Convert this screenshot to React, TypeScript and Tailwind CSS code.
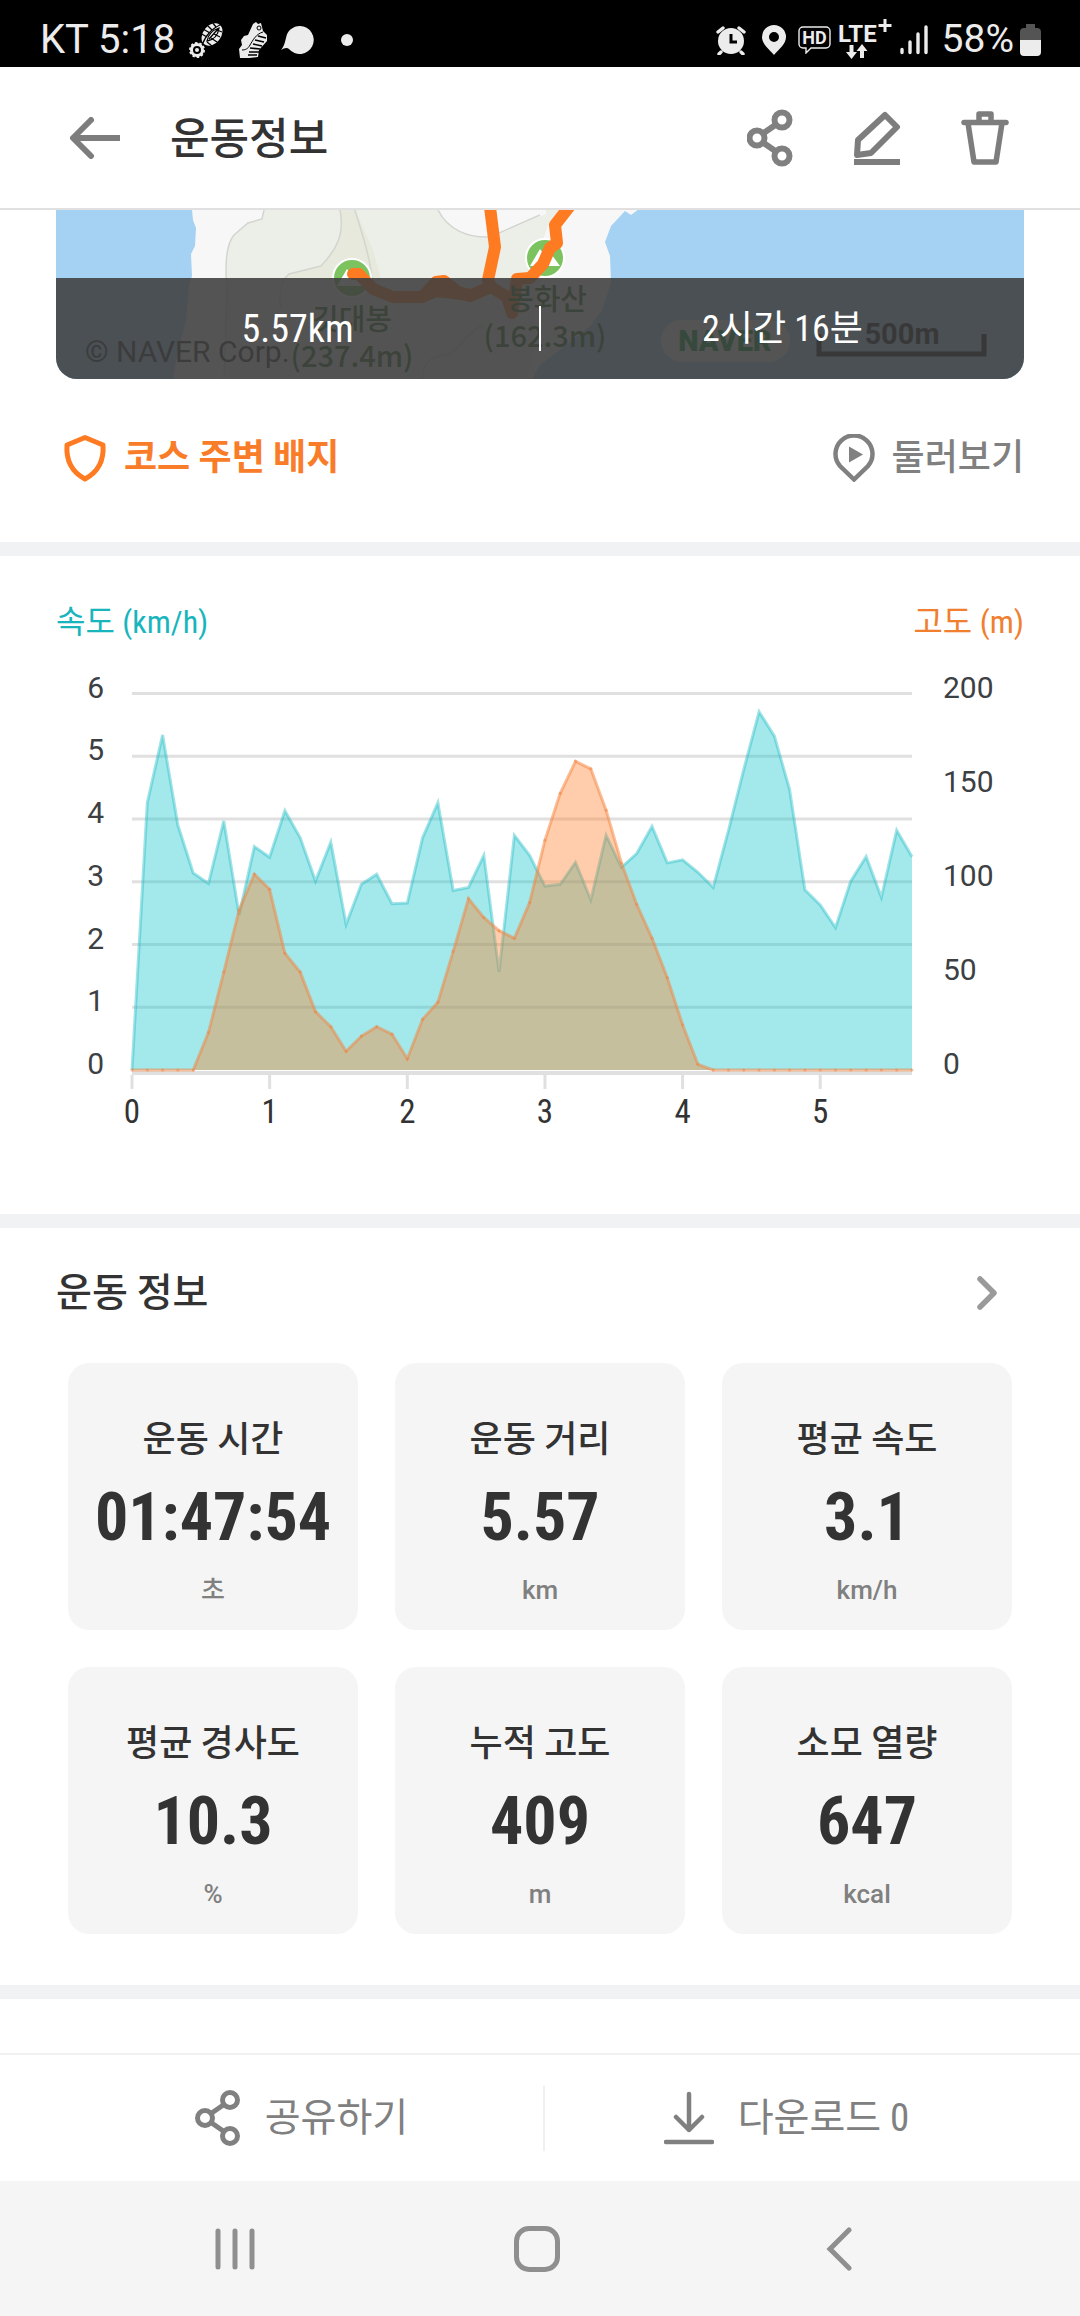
import type { ReactNode } from 'react';

const SPEED = [
  0, 4.26, 5.34, 3.9, 3.14, 2.97, 3.97, 2.47, 3.56, 3.39, 4.13, 3.7, 3.01, 3.63, 2.32, 2.96, 3.12, 2.65,
  2.66, 3.7, 4.26, 2.86, 2.91, 3.42, 1.56, 3.74, 3.42, 2.93, 2.96, 3.31, 2.71, 3.74, 3.23, 3.45, 3.88,
  3.3, 3.35, 3.15, 2.91, 3.82, 4.79, 5.71, 5.32, 4.47, 2.87, 2.63, 2.27, 3.01, 3.4, 2.75, 3.82, 3.4,
];

const ALTITUDE = [
  0, 0, 0, 0, 0, 20, 52, 85, 104, 96, 62, 52, 31, 23, 10, 18, 23, 19, 6, 27, 36, 63, 91, 81, 74, 70, 89,
  122, 147, 164, 160, 138, 110, 88, 70, 49, 24, 3, 0, 0, 0, 0, 0, 0, 0, 0, 0, 0, 0, 0, 0, 0,
];

const STATS = [
  { label: '운동 시간', value: '01:47:54', unit: '초' },
  { label: '운동 거리', value: '5.57', unit: 'km' },
  { label: '평균 속도', value: '3.1', unit: 'km/h' },
  { label: '평균 경사도', value: '10.3', unit: '%' },
  { label: '누적 고도', value: '409', unit: 'm' },
  { label: '소모 열량', value: '647', unit: 'kcal' },
];

function StatusBar() {
  return (
    <div className="flex h-[67px] items-center justify-between bg-black pt-3 pr-[39px] pl-10 font-['Roboto',sans-serif] text-[39px] leading-[55px] text-[#ececec]">
      <div className="flex items-center gap-3.5">
        <span className="text-[40px]">KT 5:18</span>
        <svg width="36" height="36" viewBox="0 0 36 36" fill="none" aria-hidden="true">
          <ellipse cx="23" cy="12.5" rx="9" ry="12.5" transform="rotate(38 23 12.5)" fill="#ececec" />
          <g stroke="#000" strokeWidth="1.3">
            <path d="M13 23C17 13 22 7 33 2M18 19c1-6 6-11 12-13-1 7-5 12-12 13zM20 17l9-10" />
            <path d="M11 11l7 4M14 7l7 4M18 3l5 5M23 0l4 5M31 15l-6-3M28 20l-6-4M23 24l-5-4M33 10l-5-2" />
          </g>
          <circle cx="8" cy="28" r="5.5" stroke="#ececec" strokeWidth="3" />
          <circle cx="8" cy="28" r="7" stroke="#ececec" strokeWidth="2" strokeDasharray="2.4 2" />
          <circle cx="8" cy="28" r="2" fill="#ececec" />
        </svg>
        <svg width="28" height="36" viewBox="0 0 28 36" aria-hidden="true">
          <path d="M14 2l3-2 2 2 3-1 2 8 4 4v6l-8 9-1 7-9 1H1l-1-9 3-4-1-5 3-4 4-1z" fill="#ececec" />
          <g stroke="#000" strokeWidth="1.6" fill="none">
            <path d="M24 10c-7 2-10 8-13 13-2 4-5 5-8 5" strokeWidth="1" />
            <path d="M19 14l8 2M16 18l9 2M14 22l9 2M11 26l10 1M10 30l10 0M9 33l9 0" />
            <circle cx="20" cy="6" r="2" strokeWidth="1" />
          </g>
        </svg>
        <svg width="34" height="30" viewBox="0 0 34 30" aria-hidden="true">
          <path d="M19 1a14 14 0 1 1-11 23c-2-2-5-1-8 1 4-5 4-9 5-12A14 14 0 0 1 19 1z" fill="#ececec" />
        </svg>
        <span className="ml-3 size-3 rounded-full bg-[#ececec]" />
      </div>
      <div className="flex items-center">
        <svg width="30" height="30" viewBox="0 0 30 30" fill="none" aria-hidden="true">
          <circle cx="15" cy="16" r="13" fill="#ececec" />
          <path d="M2 7l5-4M28 7l-5-4M5 27l-2 2M25 27l2 2" stroke="#ececec" strokeWidth="3.4" strokeLinecap="round" />
          <path d="M15 9v8h6" stroke="#000" strokeWidth="3" />
        </svg>
        <svg className="ml-4" width="24" height="30" viewBox="0 0 24 30" aria-hidden="true">
          <path fillRule="evenodd" d="M12 0a12 12 0 0 1 12 12c0 7-7 12-12 18C7 24 0 19 0 12A12 12 0 0 1 12 0zm0 7a5 5 0 1 0 0 10 5 5 0 0 0 0-10z" fill="#ececec" />
        </svg>
        <svg className="ml-3" width="34" height="28" viewBox="0 0 34 28" fill="none" aria-label="HD">
          <path d="M5 1h23a4 4 0 0 1 4 4v13a4 4 0 0 1-4 4H13l-5 5v-5H5a4 4 0 0 1-4-4V5a4 4 0 0 1 4-4z" stroke="#ececec" strokeWidth="1.4" />
          <text x="16.5" y="18" textAnchor="middle" fontFamily="Roboto" fontWeight="700" fontSize="18" fill="#ececec">HD</text>
        </svg>
        <svg className="ml-1.5" width="54" height="42" viewBox="0 0 54 42" aria-label="LTE+">
          <text x="0" y="23" fontFamily="Roboto" fontWeight="700" fontSize="24" fill="#ececec">LTE</text>
          <path d="M47 0v13M40.5 6.5h13" stroke="#ececec" strokeWidth="3" />
          <path d="M11.5 26h4v7H19L13.500 40 8 33h3.500zM22 39h4v-7h3.500L24 25l-5.500 7H22z" fill="#ececec" />
        </svg>
        <svg className="ml-2" width="28" height="30" viewBox="0 0 28 30" stroke="#ececec" strokeWidth="3.4" strokeLinecap="round" aria-hidden="true">
          <path d="M2 24.5v3M10 17v10.5M18 9v18.5M26 2v25.500" />
        </svg>
        <span className="ml-3.5">58%</span>
        <svg className="ml-1.5" width="21" height="33" viewBox="0 0 21 33" aria-hidden="true">
          <path d="M6 1h9v4h2a4 4 0 0 1 4 4v9H0V9a4 4 0 0 1 4-4h2z" fill="#545454" />
          <path d="M0 17h21v12a4 4 0 0 1-4 4H4a4 4 0 0 1-4-4z" fill="#ececec" />
        </svg>
      </div>
    </div>
  );
}

function ShareIcon({ stroke = 5 }: { stroke?: number }) {
  return (
    <svg width="46" height="58" viewBox="0 0 46 58" fill="none" stroke="#808080" strokeWidth={stroke} aria-hidden="true">
      <circle cx="10" cy="29" r="7.5" />
      <circle cx="35" cy="11" r="7.5" />
      <circle cx="35" cy="47" r="7.5" />
      <path d="M16 24.5l13-9M16 33.5l13 9" />
    </svg>
  );
}

function Header() {
  return (
    <header className="flex items-center border-b-2 border-[#e0e0e0] py-11 pr-[71px] pl-[68px]">
      <button type="button" aria-label="뒤로">
        <svg width="52" height="42" viewBox="0 0 52 42" fill="none" stroke="#7d7d7d" strokeWidth="6" aria-hidden="true">
          <path d="M4 21h48" />
          <path d="M23 3L5 21l18 18" strokeLinecap="round" strokeLinejoin="round" />
        </svg>
      </button>
      <h1 className="ml-[50px] flex-1 pt-1 text-[43px] leading-[49px] font-medium text-[#333]">운동정보</h1>
      <div className="flex h-[53px] items-center gap-[60px]">
        <button type="button" aria-label="공유">
          <ShareIcon stroke={6} />
        </button>
        <button type="button" aria-label="편집">
          <svg width="48" height="54" viewBox="0 0 48 54" fill="none" stroke="#7d7d7d" strokeWidth="6" aria-hidden="true">
            <path d="M1 51h46" />
            <path d="M4 44l1-15L32 4l12 12-26 26z" strokeLinejoin="round" />
          </svg>
        </button>
        <button type="button" aria-label="삭제">
          <svg width="48" height="54" viewBox="0 0 48 54" fill="none" stroke="#7d7d7d" strokeWidth="5.5" aria-hidden="true">
            <path d="M3 11.5h42" strokeLinecap="round" />
            <path d="M18 11V3h12v8M7 12l6 39h22l6-39" strokeLinejoin="round" />
          </svg>
        </button>
      </div>
    </header>
  );
}

function PeakMarker({ x, y }: { x: number; y: number }) {
  return (
    <g>
      <circle cx={x} cy={y} r="19" fill="#7cc35f" stroke="#fff" strokeWidth="2" />
      <path d={`M${x - 15} ${y + 8}l10-17 5 7 4-5 11 15z`} fill="#fff" />
    </g>
  );
}

function CourseMap() {
  return (
    <div className="relative mx-14 h-[169px] overflow-hidden rounded-b-[21px] bg-[#a5d2f3]">
      <svg className="h-full w-full" viewBox="0 0 968 169" preserveAspectRatio="xMidYMid slice" aria-hidden="true">
        <path d="M136 0l1 10 3 8-1 18-4 8 1 22-3 10-3 35-8 30-5 28h359l8-14 13-10 20-15 17-14 12-16 6-18 3-10-1-26-5-14 6-16 14-15 6 4 8-6z" fill="#f7f7f7" />
        <path d="M208 0l-2 9-14 4-14 12c-8 10-8 28-8 38l1 17-3 89h300l8-14 5-75 14-30-8-20 5-15 20-15z" fill="#eceee8" />
        <path d="M284 0c5 25-4 40-19 56l-32 8-8 6h100l-8-30-18-40z" fill="#e6e9dc" />
        <path d="M382 0c10 20 30 28 52 28l56-24V0z" fill="#f7f7f7" />
        <g fill="none" stroke="#d3d5cf" strokeWidth="1.5">
          <path d="M208 0l-2 9-14 4-14 12c-8 10-8 28-8 38l1 17-3 89" />
          <path d="M284 0c5 25-4 40-19 56l-32 8c-10 8-10 22-8 34" />
          <path d="M299 0c6 22 14 40 17 68l10 12" />
          <path d="M382 0c10 20 30 28 52 27l50-22M428 115c-20 8-25 28-38 30-20 2-22 10-24 24" />
        </g>
        <PeakMarker x={296} y={68} />
        <PeakMarker x={489} y={48} />
        <g fill="none" stroke="#ff7b22" strokeWidth="12" strokeLinejoin="round" strokeLinecap="round">
          <path d="M297 64h6l14 15 20 8h29l14-15 8-1 14 11 12 4 21-9-3-7 7-33-5-40" />
          <path d="M366 87l14-6 35 4 20-8 16 10 5 16 5-34 13-1 13-14 7-16 7-5-2-18 14-18" />
        </g>
        <g fontFamily="'Noto Sans CJK KR', sans-serif" fontWeight="500" fontSize="29" fill="#2e6b28" textAnchor="middle">
          <text x="296" y="120">깃대봉</text>
          <text x="296" y="157">(237.4m)</text>
          <text x="491" y="100">봉화산</text>
          <text x="489" y="137">(162.3m)</text>
        </g>
        <text x="29" y="152" fontFamily="Roboto" fontSize="30" fill="#333">© NAVER Corp.</text>
        <rect x="605" y="110" width="129" height="42" rx="21" fill="#f7f7f7" />
        <text x="669" y="141" fontFamily="Roboto" fontWeight="900" fontSize="29" fill="#0a9a3c" textAnchor="middle">NAVER</text>
        <path d="M763 124v20h165v-20" fill="none" stroke="#111" strokeWidth="5" />
        <text x="846" y="134" fontFamily="Roboto" fontWeight="700" fontSize="29" fill="#111" textAnchor="middle">500m</text>
      </svg>
      <div className="absolute inset-x-0 bottom-0 flex h-[101px] items-center bg-[#3e3e3e]/88 text-center leading-[48px] text-white">
        <span className="flex-1 text-[38px]">5.57km</span>
        <span className="h-[45px] w-0.5 bg-white" />
        <span className="flex-1 text-4xl leading-[48px]">2시간 16분</span>
      </div>
    </div>
  );
}

function CourseLinks() {
  return (
    <div className="flex items-center justify-between px-14 pt-[55px] pb-[60px] text-4xl leading-[48px]">
      <button type="button" className="flex items-center gap-4 pl-1.5 font-bold text-[#f97c28]">
        <svg width="46" height="48" viewBox="0 0 46 48" fill="none" stroke="#ff7b22" strokeWidth="5" aria-hidden="true">
          <path d="M23 3.5l18 7.500c1 14-3 26-18 34C8 37 4 25 5 11z" strokeLinejoin="round" />
        </svg>
        코스 주변 배지
      </button>
      <button type="button" className="flex items-center gap-4 font-medium text-[#808080]">
        <svg width="44" height="48" viewBox="0 0 44 48" fill="none" aria-hidden="true">
          <path d="M22 45.5L8 32A18.500 18.500 0 1 1 36 32z" stroke="#808080" strokeWidth="4.5" />
          <path d="M17 12.500v16L31 20.500z" fill="#808080" />
        </svg>
        둘러보기
      </button>
    </div>
  );
}

// Plot area inside the 968x490 drawing
const LEFT = 76;
const RIGHT = 856;
const BASE = 426;
const UNIT = 62.75;
const STEP = (RIGHT - LEFT) / (SPEED.length - 1);

const toPoints = (values: number[], perUnit: number) =>
  values.map((v, i) => `${(LEFT + i * STEP).toFixed(1)},${(BASE - v * perUnit).toFixed(1)}`).join(' ');

function PaceChart() {
  const speed = toPoints(SPEED, UNIT);
  const altScale = (UNIT * 6) / 200;
  const altitude = toPoints(ALTITUDE, altScale);
  return (
    <section className="pt-11 pb-20">
      <div className="flex justify-between px-14 text-[32px] leading-[44px]">
        <span className="text-[#19b5bd]">속도 (km/h)</span>
        <span className="text-[#f07f30]">고도 (m)</span>
      </div>
      <div className="px-14">
        <svg className="block w-full" viewBox="0 0 968 490" role="img" aria-label="속도와 고도 그래프">
          {[1, 2, 3, 4, 5, 6].map((n) => (
            <path key={n} d={`M${LEFT} ${BASE - n * UNIT}H${RIGHT}`} stroke="#e0e0e0" strokeWidth="3" />
          ))}
          <path d={`M${LEFT} ${BASE + 3}H${RIGHT}`} stroke="#e0e0e0" strokeWidth="4" />
          <polygon points={`${LEFT},${BASE} ${speed} ${RIGHT},${BASE}`} fill="#19c8cd" fillOpacity="0.4" />
          <polyline points={speed} fill="none" stroke="#19b8c4" strokeOpacity="0.4" strokeWidth="3" />
          <polygon points={`${LEFT},${BASE} ${altitude} ${RIGHT},${BASE}`} fill="#ff7b22" fillOpacity="0.38" />
          <polyline points={altitude} fill="none" stroke="#f5823a" strokeOpacity="0.5" strokeWidth="3" />
          {ALTITUDE.map((v, i) => (
            <circle key={i} cx={LEFT + i * STEP} cy={BASE - v * altScale} r="1.5" fill="#f08040" fillOpacity="0.5" />
          ))}
          <g fontFamily="Roboto" fontSize="30" fill="#3c4043">
            {[0, 1, 2, 3, 4, 5, 6].map((n) => (
              <text key={n} x="48" y={BASE + 4 - n * UNIT} textAnchor="end">{n}</text>
            ))}
            {[0, 50, 100, 150, 200].map((n) => (
              <text key={n} x="887" y={BASE + 4 - n * altScale}>{n}</text>
            ))}
          </g>
          <g fontFamily="'Roboto Condensed', Roboto" fontSize="33" fill="#333" textAnchor="middle">
            {[0, 1, 2, 3, 4, 5].map((n) => (
              <g key={n}>
                <path d={`M${LEFT + n * 9 * STEP} ${BASE + 5}v14`} stroke="#e0e0e0" strokeWidth="3" />
                <text x={LEFT + n * 9 * STEP} y="479">{n}</text>
              </g>
            ))}
          </g>
        </svg>
      </div>
    </section>
  );
}

function StatCard({ label, value, unit }: { label: string; value: string; unit: string }) {
  return (
    <div className="flex flex-col items-center gap-6 rounded-[21px] bg-[#f5f5f5] pt-[55px] pb-6">
      <dt className="text-4xl leading-[44px] font-medium text-[#333]">{label}</dt>
      <dd className="text-[66px] leading-[64px] font-bold text-[#333]">{value}</dd>
      <dd className="font-['Roboto','Noto_Sans_CJK_KR',sans-serif] text-[26px] leading-8 font-medium text-[#808080]">{unit}</dd>
    </div>
  );
}

function WorkoutInfo() {
  return (
    <section className="pt-10 pb-[51px]">
      <div className="flex items-center justify-between pr-[82px] pl-14">
        <h2 className="text-[39px] leading-[50px] font-medium text-[#333]">운동 정보</h2>
        <button type="button" aria-label="운동 정보 더보기">
          <svg width="22" height="34" viewBox="0 0 22 34" fill="none" stroke="#9a9a9a" strokeWidth="5.5" strokeLinecap="round" strokeLinejoin="round" aria-hidden="true">
            <path d="M4 3l14 14L4 31" />
          </svg>
        </button>
      </div>
      <dl className="mt-[45px] grid grid-cols-3 gap-[37px] px-[68px]">
        {STATS.map((s) => (
          <StatCard key={s.label} {...s} />
        ))}
      </dl>
    </section>
  );
}

function BottomButton({ icon, children }: { icon: ReactNode; children: ReactNode }) {
  return (
    <button type="button" className="flex h-[66px] flex-1 items-center justify-center gap-6">
      {icon}
      {children}
    </button>
  );
}

function BottomBar() {
  return (
    <div className="flex items-center border-t-2 border-[#f1f1f1] py-[30px] pr-[52px] pl-[60px] text-[39px] leading-[50px] text-[#808080]">
      <BottomButton icon={<ShareIcon />}>공유하기</BottomButton>
      <span className="h-[65px] w-0.5 bg-[#f0f0f0]" />
      <BottomButton
        icon={
          <svg width="50" height="54" viewBox="0 0 50 54" fill="none" stroke="#808080" strokeWidth="4.5" strokeLinecap="round" strokeLinejoin="round" aria-hidden="true">
            <path d="M25 3v36M12 26l13 13 13-13M2 51h46" />
          </svg>
        }
      >
        다운로드 0
      </BottomButton>
    </div>
  );
}

function NavBar() {
  return (
    <nav className="grid h-[135px] grid-cols-3 items-center justify-items-center bg-[#f5f5f5] pr-[90px] pl-[84px]">
      <button type="button" aria-label="최근 앱">
        <svg width="40" height="44" viewBox="0 0 40 44" stroke="#8f8f8f" strokeWidth="5" strokeLinecap="round" aria-hidden="true">
          <path d="M3 4v36M20 4v36M37 4v36" />
        </svg>
      </button>
      <button type="button" aria-label="홈" className="size-[46px] rounded-[15px] border-5 border-[#8f8f8f]" />
      <button type="button" aria-label="뒤로 가기">
        <svg width="26" height="44" viewBox="0 0 26 44" fill="none" stroke="#8f8f8f" strokeWidth="5" strokeLinecap="round" aria-hidden="true">
          <path d="M23 3L4 22l19 19" />
        </svg>
      </button>
    </nav>
  );
}

function Divider() {
  return <div className="h-3.5 bg-[#f1f2f4]" />;
}

export default function App() {
  return (
    <div className="flex min-h-screen flex-col bg-white font-['Roboto_Condensed','Noto_Sans_CJK_KR',sans-serif]">
      <StatusBar />
      <Header />
      <main className="flex-1">
        <CourseMap />
        <CourseLinks />
        <Divider />
        <PaceChart />
        <Divider />
        <WorkoutInfo />
        <Divider />
      </main>
      <BottomBar />
      <NavBar />
    </div>
  );
}
